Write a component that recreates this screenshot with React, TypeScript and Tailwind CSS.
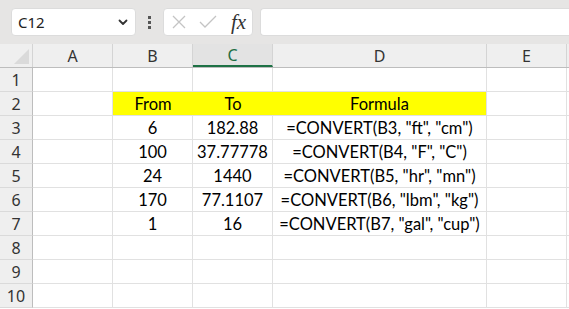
import React from "react";

const cols = ["A", "B", "C", "D", "E"];
const colW = ["w-[80px]", "w-[80px]", "w-[80px]", "w-[214px]", "w-[80px]"];

const data: Record<number, string[]> = {
  2: ["", "From", "To", "Formula", ""],
  3: ["", "6", "182.88", '=CONVERT(B3, "ft", "cm")', ""],
  4: ["", "100", "37.77778", '=CONVERT(B4, "F", "C")', ""],
  5: ["", "24", "1440", '=CONVERT(B5, "hr", "mn")', ""],
  6: ["", "170", "77.1107", '=CONVERT(B6, "lbm", "kg")', ""],
  7: ["", "1", "16", '=CONVERT(B7, "gal", "cup")', ""],
};

export default function App() {
  const rows = Array.from({ length: 10 }, (_, i) => i + 1);
  return (
    <div className="w-[569px] h-[309px] overflow-hidden bg-white" style={{ fontFamily: "Lato, sans-serif" }}>
      {/* Toolbar */}
      <div className="h-[44px] bg-[#e6e5e4] flex items-center pl-[11px] gap-0">
        <div className="w-[125px] h-[28px] bg-white rounded-[4px] border border-[#dcdcdc] flex items-center justify-between pl-[6px] pr-[6px]">
          <span className="text-[15px] text-[#222]" style={{ fontFamily: "'Noto Sans', sans-serif" }}>C12</span>
          <svg width="12" height="12" viewBox="0 0 12 12"><path d="M2.5 4.5 L6 8 L9.5 4.5" fill="none" stroke="#333" strokeWidth="1.8" strokeLinecap="round" strokeLinejoin="round" /></svg>
        </div>
        <div className="w-[27px] flex flex-col items-center justify-center gap-[2px]">
          <div className="w-[3px] h-[3px] bg-[#555]" />
          <div className="w-[3px] h-[3px] bg-[#555]" />
          <div className="w-[3px] h-[3px] bg-[#555]" />
        </div>
        <div className="w-[90px] h-[28px] bg-white rounded-[4px] border border-[#dcdcdc] flex items-center pl-[7px]">
          <svg width="16" height="16" viewBox="0 0 16 16"><path d="M2 2 L14 14 M14 2 L2 14" stroke="#c4c4c4" strokeWidth="1.3" /></svg>
          <svg width="20" height="16" viewBox="0 0 20 16" className="ml-[11px]"><path d="M2 8 L7 13 L18 2" fill="none" stroke="#c4c4c4" strokeWidth="1.3" /></svg>
          <span className="ml-[13px] text-[21px] italic text-[#333] leading-none" style={{ fontFamily: "'Liberation Serif', serif" }}>fx</span>
        </div>
        <div className="ml-[7px] flex-1 h-[28px] bg-white rounded-l-[4px] border border-r-0 border-[#dcdcdc]" />
      </div>
      {/* Column headers */}
      <div className="flex h-[24px] bg-[#efefef] border-b border-[#bdbdbd]">
        <div className="w-[33px] shrink-0 border-r border-[#d4d4d4] relative">
          <div className="absolute right-[3px] bottom-[3px] w-0 h-0 border-l-[15px] border-l-transparent border-b-[15px] border-b-[#dadada]" />
        </div>
        {cols.map((c, i) => (
          <div
            key={c}
            className={`${colW[i]} shrink-0 border-r border-[#d4d4d4] flex items-center justify-center text-[16px] ${c === "C" ? "bg-[#e3e3e3] text-[#1e6e44] border-b-2 border-b-[#1e7145]" : "text-[#333]"}`}
            style={{ fontFamily: "'Noto Sans', sans-serif" }}
          >
            {c}
          </div>
        ))}
        <div className="flex-1" />
      </div>
      {/* Rows */}
      {rows.map((r) => (
        <div key={r} className="flex h-[24px]">
          <div
            className="w-[33px] shrink-0 bg-[#efefef] border-r border-[#bdbdbd] border-b border-b-[#dadada] flex items-center justify-center text-[16px] text-[#333]"
            style={{ fontFamily: "'Noto Sans', sans-serif" }}
          >
            {r}
          </div>
          {cols.map((c, i) => {
            const v = data[r]?.[i] ?? "";
            const yellow = r === 2 && i >= 1 && i <= 3;
            const noRight = r === 2 && (i === 1 || i === 2);
            return (
              <div
                key={c}
                className={`${colW[i]} shrink-0 border-b border-[#e1e1e1] flex items-end justify-center text-[16.5px] leading-[22px] text-black whitespace-nowrap ${yellow ? "bg-[#ffff00]" : ""} ${noRight ? "" : "border-r border-r-[#e1e1e1]"}`}
              >
                {v}
              </div>
            );
          })}
          <div className="flex-1 border-b border-[#e1e1e1]" />
        </div>
      ))}
    </div>
  );
}
